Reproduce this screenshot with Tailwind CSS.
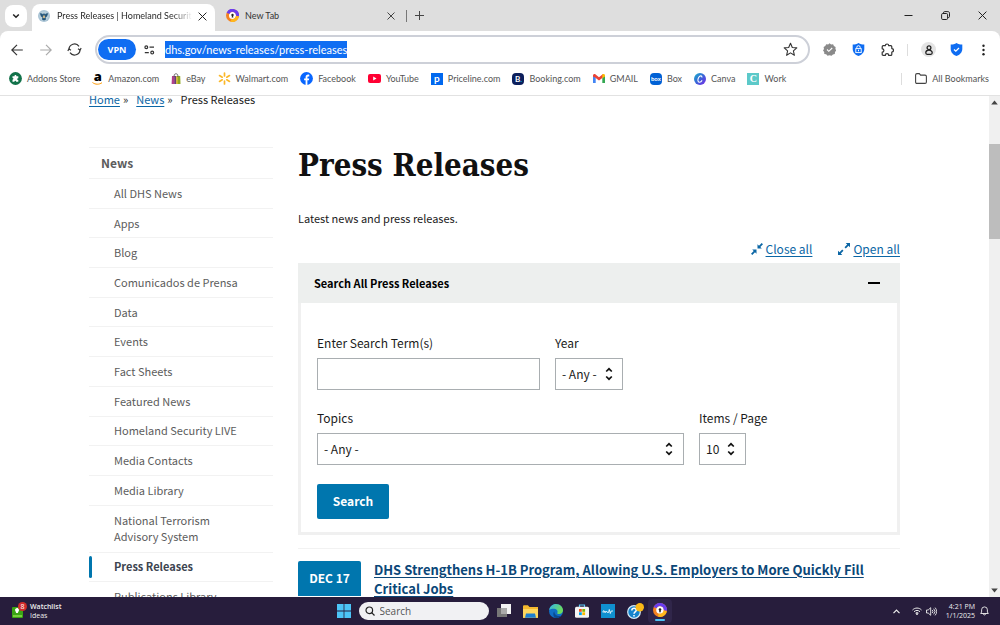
<!DOCTYPE html>
<html lang="en">
<head>
<meta charset="utf-8">
<title>Press Releases | Homeland Security</title>
<script src="https://cdn.jsdelivr.net/npm/@tailwindcss/browser@4"></script>
</head>
<body class="flex h-screen flex-col overflow-hidden bg-white font-['Lato','Open_Sans',sans-serif] text-[9px] text-[#333]">

<!-- Tab strip -->
<div class="flex h-[31px] shrink-0 items-center bg-[#dedede]">
  <button aria-label="Search tabs" class="ml-[5px] flex size-[22px] items-center justify-center rounded-lg bg-white">
    <svg class="size-2" viewBox="0 0 8 8" fill="none" stroke="#222" stroke-width="1.5"><path d="M1.2 2.5 4 5.3 6.8 2.5"/></svg>
  </button>
  <div class="ml-[5px] flex h-[27px] w-[183px] items-center self-end rounded-t-lg bg-white pr-2 pl-[6px] pb-[3px]">
    <svg class="size-3 shrink-0" viewBox="0 0 12 12"><circle cx="6" cy="6" r="6" fill="#a9c3d4"/><circle cx="6" cy="6" r="4.6" fill="#b9d0dc"/><path d="M1.8 3.2 4 3.4 5 4.6 6 3 7 4.6 8 3.4l2.2-.2L9 6.4 7.6 7.2 8 9.5 6 10.6 4 9.5l.4-2.3L3 6.4z" fill="#24557a"/><path d="M4.9 5.6h2.200v1.600L6 8.400 4.900 7.200z" fill="#c9b58a"/></svg>
    <span class="ml-[7px] flex-1 overflow-hidden bg-gradient-to-r from-[#222] from-85% to-white bg-clip-text whitespace-nowrap text-transparent">Press Releases | Homeland Security</span>
    <button aria-label="Close tab" class="ml-[6px]"><svg class="size-[9px]" viewBox="0 0 9 9" fill="none" stroke="#222"><path d="M.6.6l7.8 7.8M8.4.6.6 8.4"/></svg></button>
  </div>
  <svg class="ml-[11px] size-[13px]" viewBox="0 0 13 13"><circle cx="6.500" cy="6.500" r="5" fill="#fff" stroke="#f58220" stroke-width="3"/><path d="M2 4.300A5 5 0 0 1 11.500 7" fill="none" stroke="#6a3df0" stroke-width="3"/><path d="M11.400 7.300A5 5 0 0 1 5 11.200" fill="none" stroke="#ffb81c" stroke-width="3"/><circle cx="6.500" cy="6" r="1.200" fill="#222"/><path d="M6 6.500h1l.3 2H5.700z" fill="#222"/></svg>
  <span class="ml-[6px] w-[142px]">New Tab</span>
  <button aria-label="Close tab"><svg class="size-2" viewBox="0 0 8 8" fill="none" stroke="#444"><path d="M.5.5l7 7M7.500.5l-7 7"/></svg></button>
  <span class="ml-[11px] h-3 w-px bg-[#777]"></span>
  <button aria-label="New tab" class="ml-2"><svg class="size-[9px]" viewBox="0 0 9 9" fill="none" stroke="#444"><path d="M4.500 0v9M0 4.500h9"/></svg></button>
  <div class="mr-[13px] ml-auto flex items-center gap-7">
    <button aria-label="Minimize"><svg class="size-[9px]" viewBox="0 0 9 9"><path d="M.5 4.500h8" stroke="#222"/></svg></button>
    <button aria-label="Restore"><svg class="size-[9px]" viewBox="0 0 9 9" fill="none" stroke="#222"><rect x=".6" y="2.500" width="6" height="6" rx="1.200"/><path d="M2.500 2.400V1.800c0-.8.4-1.200 1.200-1.200h3.200c1 0 1.600.6 1.600 1.600v3.200c0 .8-.5 1.200-1.200 1.200H6.800"/></svg></button>
    <button aria-label="Close window"><svg class="size-[9px]" viewBox="0 0 9 9" fill="none" stroke="#222"><path d="M.6.6l7.800 7.800M8.400.6.6 8.400"/></svg></button>
  </div>
</div>

<!-- Toolbar -->
<div class="shrink-0 bg-[#dedede]">
<div class="flex items-center rounded-t-lg bg-white pt-1 pr-[15px] pl-[11px]">
  <button aria-label="Back"><svg class="size-3" viewBox="0 0 12 12" fill="none" stroke="#333" stroke-width="1.200"><path d="M11.800 6H1M6 .8.800 6 6 11.200"/></svg></button>
  <button aria-label="Forward" class="ml-[17px]"><svg class="size-3" viewBox="0 0 12 12" fill="none" stroke="#aaa" stroke-width="1.200"><path d="M.2 6H11M6 .8 11.200 6 6 11.200"/></svg></button>
  <button aria-label="Reload" class="ml-[15px]"><svg class="size-[15px]" viewBox="0 0 15 15" fill="none" stroke="#333" stroke-width="1.200"><path d="M2 7.500a5.500 5.500 0 0 1 10-3.200M13 7.500a5.500 5.500 0 0 1-10 3.200"/><path d="M14.200 6.200 13 8 11 6.800M.8 8.800 2 7l2 1.200"/></svg></button>
  <div class="ml-[13px] flex h-[29px] flex-1 items-center rounded-full border-2 border-[#cdd0d8] pr-[10px] pl-px">
    <button class="h-[21px] w-[38px] rounded-full bg-[#0f6df2] font-['Open_Sans',sans-serif] text-[9px] font-bold text-white">VPN</button>
    <svg class="ml-2 h-[10px] w-[11px]" viewBox="0 0 11 10" fill="none" stroke="#333" stroke-width="1.200"><circle cx="2.300" cy="2.200" r="1.400"/><path d="M5.500 2.200H10M.8 7.600h4"/><circle cx="8.200" cy="7.600" r="1.400"/></svg>
    <div class="ml-[10px] flex flex-1"><input aria-label="Address" class="field-sizing-content bg-[#0f6df2] text-[11px] leading-[17px] text-white outline-none" value="dhs.gov/news-releases/press-releases"></div>
    <button aria-label="Bookmark this page"><svg class="size-[15px]" viewBox="0 0 15 15" fill="none" stroke="#333" stroke-width="1.100" stroke-linejoin="round"><path d="m7.500 1.300 1.800 4.200 4.500.4-3.400 3 1 4.400-3.900-2.400-3.900 2.400 1-4.400-3.400-3 4.500-.4z"/></svg></button>
  </div>
  <div class="ml-[13px] flex items-center">
    <svg class="size-[13px]" viewBox="0 0 13 13"><path d="m6.500.3 1.600 1.100 2-.2.800 1.800 1.700.9-.2 2 .9 1.600-1.300 1.400-.2 2-1.900.5-1.300 1.400-2.100-.6-2 .6-1.300-1.500-1.900-.4-.1-2L0 7.500 1 5.900l-.4-2 1.700-.9.900-1.800 2 .2z" fill="#8a8a8a"/><path d="m4 6.500 1.800 1.800L9.200 5" fill="none" stroke="#fff" stroke-width="1.100"/></svg>
    <svg class="ml-4 size-[13px]" viewBox="0 0 13 13"><path d="M6.500 0C8.300 1 10 1.500 12.300 1.600V6c0 3.400-2.500 5.800-5.800 7C3.200 11.800.7 9.400.7 6V1.600C3 1.500 4.700 1 6.500 0z" fill="#0f6df2"/><path d="M4.800 5.500V4.400a1.700 1.700 0 0 1 3.400 0v1.100" fill="none" stroke="#fff"/><rect x="3.800" y="5.600" width="5.400" height="4" fill="none" stroke="#fff" stroke-width=".9"/><path d="M6.500 6.700v1.600" stroke="#fff"/></svg>
    <svg class="ml-[15px] size-[14px]" viewBox="0 0 14 14" fill="none" stroke="#333" stroke-width="1.200" stroke-linejoin="round"><path d="M2.200 3.700c0-.6.400-1 1-1h2.100a1.700 1.700 0 0 1 3.400 0h2.100c.6 0 1 .4 1 1v1.900a1.700 1.700 0 0 1 0 3.400v2.400c0 .6-.4 1-1 1H8.700a1.700 1.700 0 0 0-3.400 0H3.200c-.6 0-1-.4-1-1V9.200a1.700 1.700 0 0 0 0-3.400z"/></svg>
    <span class="ml-[13px] h-3 w-px bg-[#ddd]"></span>
    <button aria-label="Profile" class="ml-[13px] flex size-[15px] items-center justify-center rounded-full bg-[#e4e4e4]"><svg class="h-[10px] w-2" viewBox="0 0 8 10" fill="none" stroke="#222" stroke-width="1.300"><circle cx="4" cy="2.700" r="1.900"/><path d="M4 5.200c-2 0-3.200 1.200-3.200 2.600 0 .9.500 1.500 1.300 1.500h3.800c.8 0 1.300-.6 1.300-1.500C7.200 6.400 6 5.200 4 5.200z"/></svg></button>
    <svg class="ml-[14px] size-[13px]" viewBox="0 0 13 13"><path d="M6.500 0C8.300 1 10 1.500 12.300 1.600V6c0 3.400-2.500 5.800-5.800 7C3.200 11.800.7 9.400.7 6V1.600C3 1.500 4.700 1 6.500 0z" fill="#0f6df2"/><path d="m4 6.500 1.800 1.700L9 5" fill="none" stroke="#fff" stroke-width="1.300"/></svg>
    <button aria-label="Menu" class="ml-[19px]"><svg class="h-3 w-[3px]" viewBox="0 0 3 12" fill="#222"><circle cx="1.500" cy="1.800" r="1.200"/><circle cx="1.500" cy="6" r="1.200"/><circle cx="1.500" cy="10.200" r="1.200"/></svg></button>
  </div>
</div>
</div>

<!-- Bookmarks bar -->
<nav aria-label="Bookmarks" class="flex h-8 shrink-0 items-center gap-3 border-b border-[#e2e2e2] pr-[11px] pb-[2px] pl-[9px] whitespace-nowrap text-[#555]">
  <a href="#" class="flex items-center gap-[5px]"><svg class="size-[13px]" viewBox="0 0 13 13"><circle cx="6.500" cy="6.500" r="6.400" fill="#12724a"/><path d="M3.500 4.300h2c-.3-1.800 2.200-1.800 1.900 0h1.900v1.900c-1.600-.2-1.600 2 0 1.900v1.700H7.100c0-1.400-1.700-1.400-1.700 0H3.500V7.700c1.300 0 1.300-1.600 0-1.600z" fill="#fff"/></svg>Addons Store</a>
  <a href="#" class="flex items-center gap-[5px]"><span class="flex w-[11px] flex-col items-center font-['Open_Sans',sans-serif] text-[13px] leading-[9px] font-extrabold text-black"><span class="-mt-px pb-px">a</span><svg class="h-[3px] w-[11px]" viewBox="0 0 11 3" fill="none" stroke="#f90"><path d="M.5.5c3 2.300 6.500 2.200 9.500.2"/></svg></span>Amazon.com</a>
  <a href="#" class="flex items-center gap-[5px]"><svg class="h-[11px] w-[10px]" viewBox="0 0 10 11"><path d="M1 3h2.600v8H.6z" fill="#b0408a"/><path d="M3.300 3h2v8h-2z" fill="#6a3b78"/><path d="M5.200 3h1.900v8H5.200z" fill="#c9b42a"/><path d="M7 3h2.200l.3 8H7z" fill="#8fa821"/><path d="M3.200 4V2.300c0-2 3.600-2 3.600 0V4" fill="none" stroke="#555" stroke-width=".9"/></svg>eBay</a>
  <a href="#" class="flex items-center gap-[5px]"><svg class="size-[13px]" viewBox="0 0 13 13" stroke="#fbb829" stroke-width="1.700" stroke-linecap="round"><path d="M6.500 1v3M6.500 9v3M1.500 3.600l2.700 1.600M8.800 7.800l2.700 1.600M11.500 3.600 8.800 5.200M4.200 7.800 1.500 9.400"/></svg>Walmart.com</a>
  <a href="#" class="flex items-center gap-[5px]"><svg class="size-[13px]" viewBox="0 0 13 13"><circle cx="6.500" cy="6.500" r="6.400" fill="#0866ff"/><path d="M5.600 12.900V8.300H4.100V6.500h1.500V5.300c0-1.800.9-2.700 2.600-2.700.4 0 .9.100 1.100.2v1.600h-.8c-.8 0-1.100.4-1.100 1.100v1h1.800l-.3 1.800H7.400v4.600z" fill="#fff"/></svg>Facebook</a>
  <a href="#" class="flex items-center gap-[5px]"><svg class="h-[9px] w-[13px]" viewBox="0 0 13 9"><rect width="13" height="9" rx="2" fill="#f03"/><path d="m5.200 2.600 3.300 1.900-3.300 1.900z" fill="#fff"/></svg>YouTube</a>
  <a href="#" class="flex items-center gap-[5px]"><span class="flex size-3 items-center justify-center bg-[#0068ef] pb-[2px] text-[10px] leading-3 font-bold text-white">p</span>Priceline.com</a>
  <a href="#" class="flex items-center gap-[5px]"><span class="flex size-3 items-center justify-center rounded-sm bg-[#0c1f5c] text-[8px] leading-3 font-bold text-white">B<span class="text-[#00a9e8]">.</span></span>Booking.com</a>
  <a href="#" class="flex items-center gap-[5px]"><svg class="h-[9px] w-3" viewBox="0 0 12 9"><path d="M0 1.500V9h2.700V3.500z" fill="#4285f4"/><path d="M12 1.500V9H9.300V3.500z" fill="#34a853"/><path d="M0 1.600C0 .2 1.500-.4 2.600.5L6 3.200 9.400.5c.3-.2.600-.3.900-.3v3L6 6.500 1.700 3.200 0 2.700z" fill="#ea4335"/><path d="M9.300.6C10.500-.4 12 .2 12 1.600v.8L9.300 4.200z" fill="#fbbc04"/></svg>GMAIL</a>
  <a href="#" class="flex items-center gap-[5px]"><span class="flex size-3 items-center justify-center rounded-sm bg-[#0061d5] text-[6px] leading-3 font-bold text-white">box</span>Box</a>
  <a href="#" class="flex items-center gap-[5px]"><svg class="size-3" viewBox="0 0 12 12"><defs><linearGradient id="cv" x1="0" y1="0" x2="1" y2="1"><stop offset="0" stop-color="#16b5c9"/><stop offset=".5" stop-color="#3a62d8"/><stop offset="1" stop-color="#7d2ae8"/></linearGradient></defs><circle cx="6" cy="6" r="6" fill="url(#cv)"/><path d="M8 4.400C8 2.400 5.900 2.500 4.800 4.200c-1.300 2-1.300 4.800.6 5 1.200.1 2.100-.8 2.700-1.800" fill="none" stroke="#fff" stroke-width="1.100"/></svg>Canva</a>
  <a href="#" class="flex items-center gap-[5px]"><span class="flex size-3 items-center justify-center bg-[#5cc9c9] font-['Liberation_Serif',serif] text-[10px] leading-3 font-bold text-white">C</span>Work</a>
  <a href="#" class="ml-auto flex items-center gap-[5px]"><span class="mr-2 h-3 w-px bg-[#ddd]"></span><svg class="h-[11px] w-3" viewBox="0 0 12 11" fill="none" stroke="#444" stroke-width="1.100"><path d="M.6 9V2C.6 1.100 1 .6 2 .6h2.300l1.300 1.500H10c.9 0 1.400.5 1.400 1.400V9c0 .9-.5 1.400-1.400 1.400H2C1 10.400.6 9.900.6 9z"/></svg>All Bookmarks</a>
</nav>

<!-- Page viewport -->
<div class="flex min-h-0 flex-1">
  <div class="flex-1 overflow-hidden font-['Noto_Sans_CJK_SC',sans-serif] text-[12px] text-[#1b1b1b]">
    <div class="mx-auto max-w-[811px]">
      <nav aria-label="Breadcrumb" class="-mt-[5px] flex text-[11px] leading-4">
        <a href="#" class="text-[#0b66a5] underline underline-offset-2">Home</a><span class="ml-[3px]">»</span>
        <a href="#" class="ml-2 text-[#0b66a5] underline underline-offset-2">News</a><span class="ml-[3px]">»</span>
        <span class="ml-2">Press Releases</span>
      </nav>
      <div class="mt-10 flex gap-[25px]">
        <nav aria-label="News" class="w-[184px] shrink-0 text-[11px] leading-4 text-[#5c5c5c]">
          <a href="#" class="flex h-[31px] items-center border-t border-[#f2f2f2] pl-3 text-[12px] font-bold">News</a>
          <ul class="flex h-[433px] flex-col *:flex *:grow *:basis-[29px] *:items-center *:border-t *:border-[#f2f2f2] *:pb-px *:pl-[25px]">
            <li><a href="#">All DHS News</a></li>
            <li><a href="#">Apps</a></li>
            <li><a href="#">Blog</a></li>
            <li><a href="#">Comunicados de Prensa</a></li>
            <li><a href="#">Data</a></li>
            <li><a href="#">Events</a></li>
            <li><a href="#">Fact Sheets</a></li>
            <li><a href="#">Featured News</a></li>
            <li><a href="#">Homeland Security LIVE</a></li>
            <li><a href="#">Media Contacts</a></li>
            <li><a href="#">Media Library</a></li>
            <li class="min-h-[47px]"><a href="#">National Terrorism<br>Advisory System</a></li>
            <li class="relative font-bold text-[#3d4551]"><span class="absolute inset-y-[3px] left-0 w-[3px] rounded-full bg-[#0076ae]"></span><a href="#">Press Releases</a></li>
            <li><a href="#">Publications Library</a></li>
          </ul>
        </nav>
        <main class="min-w-0 flex-1">
          <h1 class="font-['DejaVu_Serif_Condensed','Liberation_Serif',serif] text-[31px] leading-9 font-bold text-[#111]">Press Releases</h1>
          <p class="mt-[27px] text-[11px] leading-4">Latest news and press releases.</p>
          <div class="mt-[15px] flex justify-end gap-[26px] leading-4 text-[#0b66a5]">
            <button class="flex items-center gap-[3px]"><svg class="size-3" viewBox="0 0 12 12" fill="#0b66a5"><path d="M6.500 5.500V1.200l1.500 1.500L10.700 0 12 1.300 9.300 4l1.500 1.500zM5.500 6.500H1.200l1.500 1.500L0 10.700 1.300 12 4 9.300l1.500 1.500z"/></svg><span class="underline underline-offset-2">Close all</span></button>
            <button class="flex items-center gap-[3px]"><svg class="size-3" viewBox="0 0 12 12" fill="#0b66a5"><path d="M12 0v4.300l-1.500-1.500-2.700 2.700-1.300-1.300 2.700-2.700L7.700 0zM0 12V7.700l1.500 1.500 2.700-2.700 1.300 1.300-2.700 2.700L4.300 12z"/></svg><span class="underline underline-offset-2">Open all</span></button>
          </div>
          <section class="mt-[6px] border-x-[3px] border-b-[3px] border-[#f0f0f0]">
            <button class="-mx-[3px] flex h-10 w-[calc(100%+6px)] items-center justify-between bg-[#edefee] pr-5 pl-4 text-[11px] font-bold text-black">Search All Press Releases<span class="h-[2px] w-3 bg-black"></span></button>
            <form class="px-4 pt-8 pb-[13px] leading-4">
              <div class="flex gap-[15px]">
                <div><label for="term" class="block">Enter Search Term(s)</label><input id="term" class="mt-[7px] block h-8 w-[223px] border border-[#a9aeb1] px-2"></div>
                <div><label for="year" class="block">Year</label>
                  <div class="relative mt-[7px]"><select id="year" class="block h-8 w-[68px] appearance-none border border-[#a9aeb1] bg-white pl-[6px]"><option>- Any -</option></select><svg class="pointer-events-none absolute top-[9px] right-[10px] h-[14px] w-2" viewBox="0 0 8 14" fill="none" stroke="#111" stroke-width="1.700"><path d="M1.200 4.500 4 1.800l2.800 2.700M1.200 9.500 4 12.200l2.800-2.700"/></svg></div></div>
              </div>
              <div class="mt-5 flex gap-[15px]">
                <div><label for="topics" class="block">Topics</label>
                  <div class="relative mt-[7px]"><select id="topics" class="block h-8 w-[367px] appearance-none border border-[#a9aeb1] bg-white pl-[6px]"><option>- Any -</option></select><svg class="pointer-events-none absolute top-[9px] right-[11px] h-[14px] w-2" viewBox="0 0 8 14" fill="none" stroke="#111" stroke-width="1.700"><path d="M1.200 4.500 4 1.800l2.800 2.700M1.200 9.500 4 12.200l2.800-2.700"/></svg></div></div>
                <div><label for="items" class="block">Items / Page</label>
                  <div class="relative mt-[7px] w-[47px]"><select id="items" class="block h-8 w-full appearance-none border border-[#a9aeb1] bg-white pl-[6px]"><option>10</option></select><svg class="pointer-events-none absolute top-[9px] right-[11px] h-[14px] w-2" viewBox="0 0 8 14" fill="none" stroke="#111" stroke-width="1.700"><path d="M1.200 4.500 4 1.800l2.800 2.700M1.200 9.500 4 12.200l2.800-2.700"/></svg></div></div>
              </div>
              <button type="button" class="mt-[19px] h-[35px] w-[72px] rounded-xs bg-[#0076ae] pb-px font-bold text-white">Search</button>
            </form>
          </section>
          <article class="mt-[13px] flex gap-[13px] border-t border-[#f2f2f2] pt-3">
            <time datetime="2024-12-17" class="flex h-[35px] w-[63px] shrink-0 items-center justify-center rounded-t-xs bg-[#0076ae] pb-px font-bold text-white">DEC 17</time>
            <h2 class="-mt-px text-[13px] leading-[19px] font-bold"><a href="#" class="text-[#0b4778] underline underline-offset-2">DHS Strengthens H-1B Program, Allowing U.S. Employers to More Quickly Fill Critical Jobs</a></h2>
          </article>
        </main>
      </div>
    </div>
  </div>
  <div class="flex w-[11px] shrink-0 flex-col items-center bg-[#f0f0f0] py-1">
    <svg class="h-[5px] w-[7px]" viewBox="0 0 7 5" fill="#444"><path d="M3.500.5 6.800 4.500H.2z"/></svg>
    <div class="mt-[39px] h-[95px] w-full bg-[#bdbdbd]"></div>
    <svg class="mt-auto h-[5px] w-[7px]" viewBox="0 0 7 5" fill="#444"><path d="M3.500 4.500.2.500h6.600z"/></svg>
  </div>
</div>

<!-- Taskbar -->
<footer class="grid h-7 shrink-0 grid-cols-[1fr_auto_1fr] items-center bg-[#271d3c] px-[11px] font-['Open_Sans',sans-serif] text-[#eee]">
  <div class="flex items-center gap-[5px]">
    <div class="relative"><svg class="h-[15px] w-[14px]" viewBox="0 0 14 15"><rect x="1" y="3" width="11" height="11" rx="1" fill="#3aa514"/><path d="M2 12h9" stroke="#8be04a" stroke-width="1.500"/><path d="M4 6a2 2 0 1 1 3.600 1.200L6.800 9H5.200l-.7-1.700z" fill="#fff"/></svg>
    <span class="absolute -top-[2px] -right-[2px] flex size-[9px] items-center justify-center rounded-full bg-[#cf2b2b] text-[7px] leading-none text-white">8</span></div>
    <div class="text-[7px] leading-[9px]"><div class="font-semibold">Watchlist</div><div>Ideas</div></div>
  </div>
  <div class="flex items-center pl-2">
    <svg class="size-[14px]" viewBox="0 0 14 14" fill="#4cc4f7"><path d="M0 0h6.600v6.600H0zM7.400 0H14v6.600H7.400zM0 7.400h6.600V14H0zM7.400 7.400H14V14H7.400z"/></svg>
    <label class="ml-2 flex h-[18px] w-[130px] items-center rounded-full bg-[#f1f1f3] pl-[6px]"><svg class="size-[10px]" viewBox="0 0 10 10" fill="none" stroke="#222" stroke-width="1.200"><circle cx="4.300" cy="4.300" r="3.300"/><path d="M6.700 6.700l2.800 2.800"/></svg><input type="search" aria-label="Search" placeholder="Search" class="ml-[5px] w-20 text-[10px] leading-4 outline-none placeholder:text-[#555]"></label>
    <svg class="ml-2 size-[14px]" viewBox="0 0 14 14"><rect x="4" y="0" width="10" height="10" fill="#f3f3f3"/><rect x="0" y="4" width="10" height="9" fill="#777" /><rect x="4" y="4" width="6" height="6" fill="#aaa"/></svg>
    <svg class="ml-3 h-[13px] w-[15px]" viewBox="0 0 15 13"><path d="M0 1.500C0 .7.500.200 1.300.200h3.600L6.500 2H15v10.800H0z" fill="#f5b92e"/><path d="M0 4h15v8.800H0z" fill="#ffd75e"/><path d="M3 8.500h9l1 4.300H2z" fill="#1d7fd0"/></svg>
    <svg class="ml-[11px] size-[14px]" viewBox="0 0 14 14"><defs><linearGradient id="e1" x1="0" y1="0" x2="1" y2=".4"><stop offset="0" stop-color="#36b5ea"/><stop offset="1" stop-color="#6ddc5c"/></linearGradient></defs><circle cx="7" cy="7" r="7" fill="#0f6fc6"/><path d="M.2 6C.8 2.400 3.600 0 7 0c4 0 7 3 7 6.200 0 2.300-1.700 3.800-3.800 3.800-1.300 0-2.200-.4-2-1 .900-1 .4-3.800-2.700-4.200C3.400 4.600 1.400 5.100.2 6z" fill="url(#e1)"/><path d="M5.300 7.500c0 2.300 2 4.600 5 4.600.9 0 1.800-.3 2.300-.7-1 1.500-3 2.600-5.100 2.600-3 0-4.200-4.700-2.200-6.500z" fill="#0a4a8f"/></svg>
    <svg class="ml-3 size-[14px]" viewBox="0 0 14 14"><path d="M4.500 3.500V1h5v2.500" fill="none" stroke="#5cc8f5" stroke-width="1.200"/><rect y="2.800" width="14" height="11" rx="1.500" fill="#f4f4f4"/><path d="M4 5h2.800v2.800H4z" fill="#f25022"/><path d="M7.300 5h2.800v2.800H7.300z" fill="#7fba00"/><path d="M4 8.300h2.800v2.800H4z" fill="#00a4ef"/><path d="M7.300 8.300h2.800v2.800H7.300z" fill="#ffb900"/></svg>
    <svg class="ml-3 size-[14px]" viewBox="0 0 14 14"><rect width="14" height="14" fill="#1090cf"/><path d="M2 8.500V7c.8-.8 1.200 0 1.200 1.500 0-2 1.300-2 1.300 0L5.500 7l.8 1.500h1.200l.8-3 1 4 .9-2.500H12" fill="none" stroke="#fff" stroke-width=".8"/></svg>
    <svg class="ml-3 h-4 w-[17px]" viewBox="0 0 17 16"><circle cx="7" cy="9" r="6.300" fill="#1583cd" stroke="#d8ecf8" stroke-width="1.200"/><path d="M4.800 7.400c.1-3 4.500-2.800 4.400-.2C9.100 9 7 8.800 7 10.800M7 12v1.500" fill="none" stroke="#fff" stroke-width="1.500"/><circle cx="12.800" cy="4.200" r="4.200" fill="#fbb917"/></svg>
    <div class="ml-1 flex size-6 flex-col items-center justify-center gap-[2px] rounded-sm bg-[#30264a] pt-[2px]"><svg class="size-[14px]" viewBox="0 0 13 13"><circle cx="6.500" cy="6.500" r="5" fill="#fff" stroke="#f58220" stroke-width="3"/><path d="M2 4.300A5 5 0 0 1 11.500 7" fill="none" stroke="#6a3df0" stroke-width="3"/><path d="M11.400 7.300A5 5 0 0 1 5 11.200" fill="none" stroke="#ffb81c" stroke-width="3"/><circle cx="6.500" cy="6" r="1.200" fill="#222"/><path d="M6 6.500h1l.3 2H5.700z" fill="#222"/></svg><span class="h-[2px] w-[10px] rounded-full bg-[#4cc4f7]"></span></div>
  </div>
  <div class="flex items-center justify-end">
    <svg class="h-[5px] w-[7px]" viewBox="0 0 7 5" fill="none" stroke="#eee" stroke-width="1.200"><path d="M.5 4.200 3.500 1.200l3 3"/></svg>
    <svg class="ml-3 h-2 w-[10px]" viewBox="0 0 10 8" fill="none" stroke="#eee"><path d="M.5 3c2.500-2.600 6.500-2.600 9 0M2 4.700c1.700-1.700 4.300-1.700 6 0M3.500 6.200c.9-.9 2.100-.9 3 0"/><circle cx="5" cy="7" r=".6" fill="#eee"/></svg>
    <svg class="ml-1 h-[9px] w-[11px]" viewBox="0 0 11 9" fill="none" stroke="#eee" stroke-width=".9"><path d="M.5 3v3h1.700L4.700 8.300V.7L2.200 3zM6.300 3a2.300 2.300 0 0 1 0 3M7.700 1.700a4 4 0 0 1 0 5.600M9.100.6a5.800 5.800 0 0 1 0 7.800"/></svg>
    <div class="ml-[9px] text-right text-[7px] leading-[9px]"><div>4:21 PM</div><div>1/1/2025</div></div>
    <svg class="ml-[5px] h-[10px] w-[9px]" viewBox="0 0 9 10" fill="none" stroke="#eee" stroke-width=".9"><path d="M.7 7.500 1.600 6V3.800a2.900 2.900 0 0 1 5.800 0V6l.9 1.500zM3.300 7.700c.2 1.700 2.200 1.700 2.400 0"/></svg>
  </div>
</footer>
</body>
</html>
